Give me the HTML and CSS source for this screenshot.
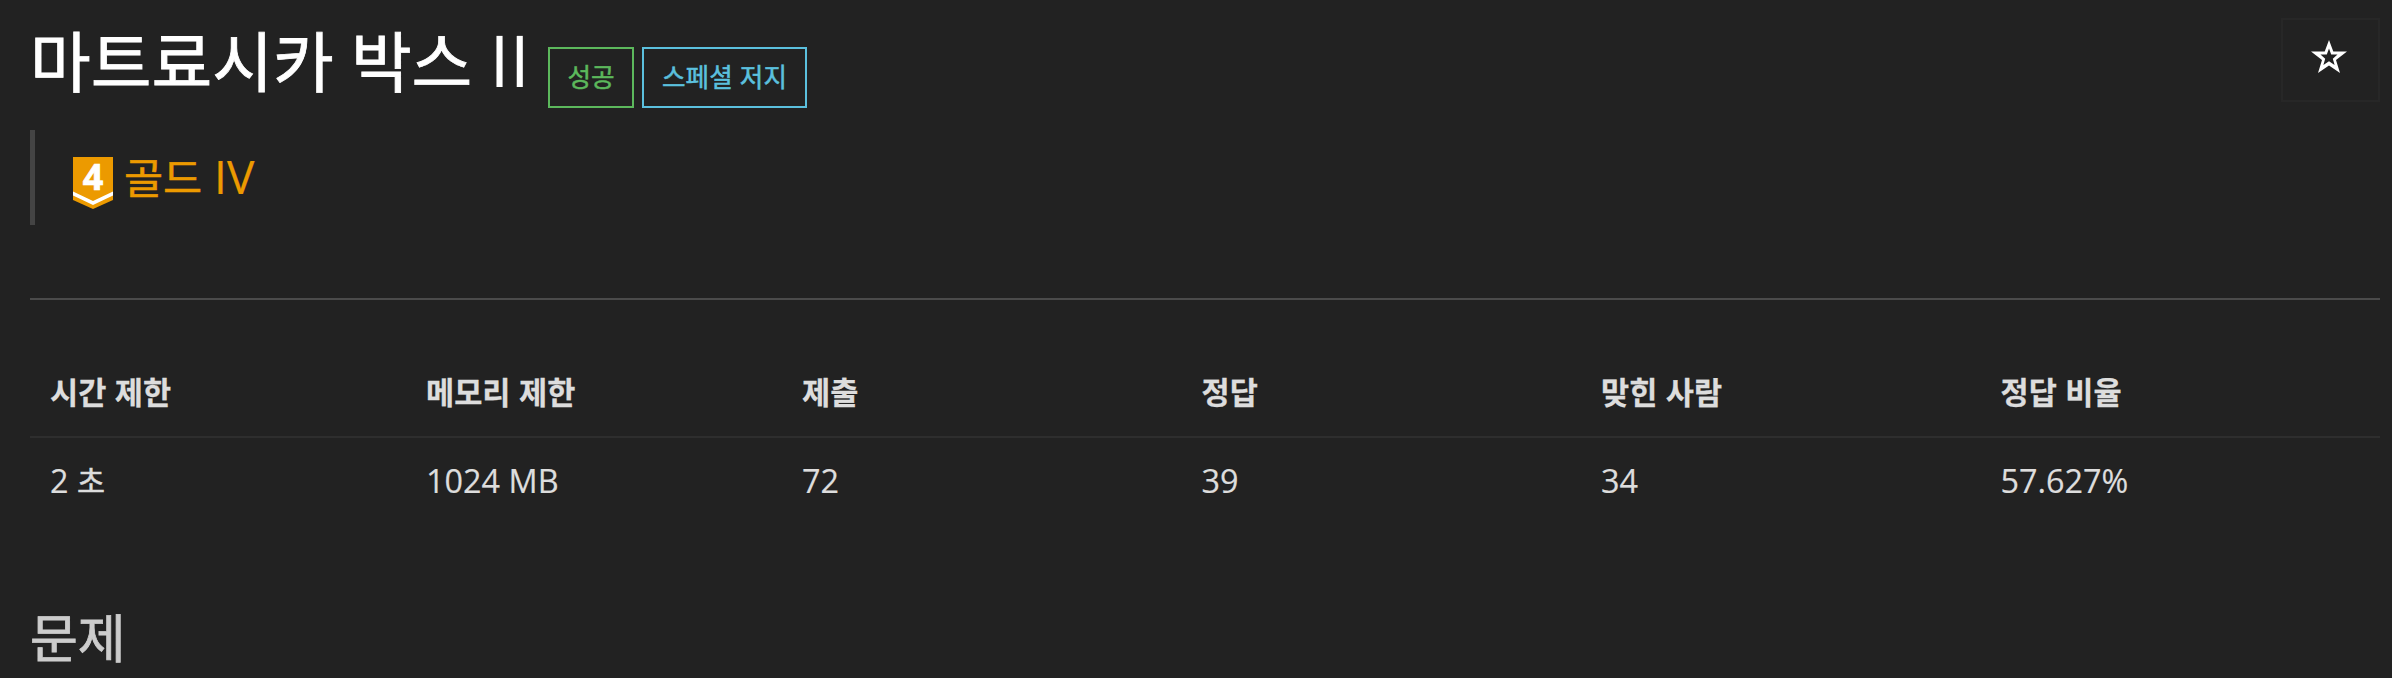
FILE: index.html
```html
<!DOCTYPE html>
<html lang="ko">
<head>
<meta charset="utf-8">
<title>마트료시카 박스 II</title>
<link rel="stylesheet" href="styles.css">
</head>
<body>
<main class="page">
  <header class="header">
    <div class="heading">
      <h1 class="title">마트료시카 박스 <span class="title-roman">II</span></h1>
      <span class="label label-success">성공</span>
      <span class="label label-info">스페셜 저지</span>
    </div>
    <button class="favorite" aria-label="즐겨찾기">
      <svg class="star" viewBox="0 0 36 33"><path fill="#fff" fill-rule="evenodd" d="M18 0 22.3 11.5H36L25 20 29 33 18 25.5 7 33 11 20 0 11.5H13.7ZM18 8.5 15.8 14.5H9.5L14.2 18.8 12.4 25 18 21.2 23.6 25 21.8 18.8 26.5 14.5H20.2Z"/></svg>
    </button>
  </header>
  <blockquote class="tier">
    <svg class="tier-icon" viewBox="0 0 40 52">
      <path fill="#ec9a00" d="M0 0H40V43L20 52 0 43Z"/>
      <path fill="#fff" d="M0 34.5 20 44 40 34.5V38.5L20 48 0 38.5Z"/>
      <text class="tier-number" x="20" y="33">4</text>
    </svg>
    <span class="tier-name">골드 <span class="tier-roman">IV</span></span>
  </blockquote>
  <hr class="divider">
  <table class="info">
    <thead><tr><th class="limit">시간 제한</th><th class="limit">메모리 제한</th><th>제출</th><th>정답</th><th>맞힌 사람</th><th>정답 비율</th></tr></thead>
    <tbody><tr><td>2 <span class="unit">초</span></td><td>1024 MB</td><td>72</td><td>39</td><td>34</td><td>57.627%</td></tr></tbody>
  </table>
  <h2 class="section-title">문제</h2>
</main>
</body>
</html>
```
FILE: styles.css
```css
* { box-sizing: border-box; }
body {
  margin: 0;
  background: #222;
  color: #ddd;
  font-family: "Open Sans", "Noto Sans CJK KR", sans-serif;
}
.page { height: 678px; padding: 14px 12px 0 30px; }
.header { display: flex; justify-content: space-between; height: 116px; }
.heading { display: flex; align-items: flex-start; }
.title {
  width: 518px;
  margin: 0;
  color: #fff;
  font: 400 66px/88px "Noto Sans CJK KR", sans-serif;
  word-spacing: -1.2px;
  -webkit-text-stroke: 0.8px;
  white-space: nowrap;
}
.title-roman { font: 400 72px/1 "Open Sans", sans-serif; -webkit-text-stroke: 0; }
.label {
  width: 86px;
  height: 61px;
  margin: 33px 8px 0 0;
  border: 2px solid;
  font: 400 25.6px/54px "Noto Sans CJK KR", sans-serif;
  -webkit-text-stroke: 0.5px;
  text-align: center;
  white-space: nowrap;
}
.label-success { color: #5cb85c; }
.label-info { width: 165px; color: #5bc0de; }
.favorite {
  display: flex;
  justify-content: center;
  width: 99px;
  height: 84px;
  margin-top: 4px;
  padding: 20px 0 0;
  border: 2px solid #272727;
  background: #222;
}
.star { width: 36px; height: 33px; margin-right: 3px; }
.tier {
  display: flex;
  align-items: flex-start;
  gap: 11px;
  height: 95px;
  margin: 0;
  padding-left: 38px;
  border-left: 5px solid #444;
}
.tier-icon { width: 40px; height: 52px; margin-top: 27px; }
.tier-number { fill: #fff; stroke: #fff; stroke-width: 0.7px; font: 700 36px "Noto Sans", sans-serif; text-anchor: middle; }
.tier-name {
  color: #ec9a00;
  font: 400 42.5px/92px "Noto Sans CJK KR", sans-serif;
  -webkit-text-stroke: 0.5px;
  white-space: nowrap;
}
.tier-roman { font: 400 46px/1 "Open Sans", sans-serif; -webkit-text-stroke: 0.2px; }
.divider { height: 2px; margin: 73px 0 50px; border: 0; background: #4b4b4b; }
.info { width: 100%; border-collapse: separate; border-spacing: 0; table-layout: fixed; }
.info th, .info td { width: 17%; padding: 0 20px; text-align: left; font-size: 32.4px; line-height: 46px; }
.info .limit { width: 16%; }
.info th { height: 88px; padding-bottom: 5px; border-bottom: 2px solid #2e2e2e; font: 700 30.6px/42px "Noto Sans CJK KR", sans-serif; -webkit-text-stroke: 0.3px; }
.info td { height: 84px; padding-bottom: 1px; -webkit-text-stroke: 0.2px; }
.unit { font: 400 30.5px/1 "Noto Sans CJK KR", sans-serif; -webkit-text-stroke: 0.5px; }
.section-title {
  margin: 74px 0 0;
  color: #ccc;
  font: 400 52px/80px "Noto Sans CJK KR", sans-serif;
  -webkit-text-stroke: 0.8px;
}
```
